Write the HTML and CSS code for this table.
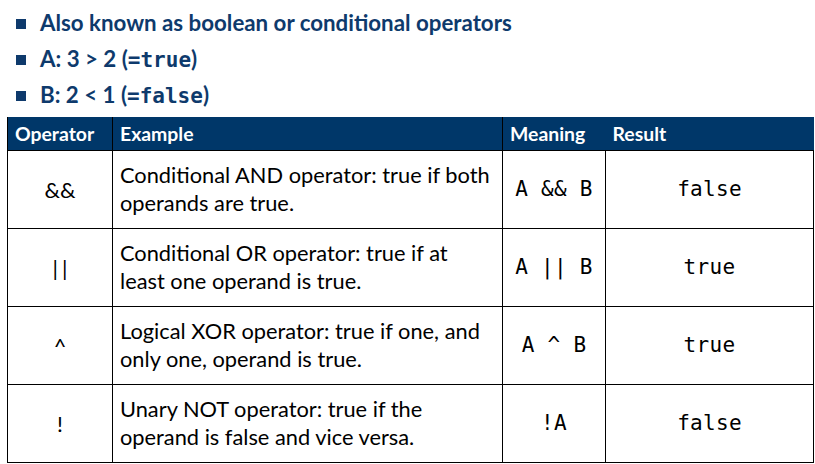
FILE: index.html
```html
<!DOCTYPE html>
<html>
<head>
<meta charset="utf-8">
<link rel="stylesheet" href="styles.css">
</head>
<body>
<ul class="bullets">
  <li>Also known as boolean or conditional operators</li>
  <li>A: 3 &gt; 2 (<span class="mono">=true</span>)</li>
  <li>B: 2 &lt; 1 (<span class="mono">=false</span>)</li>
</ul>
<table class="ops">
  <colgroup>
    <col class="c-op"><col class="c-ex"><col class="c-me"><col class="c-re">
  </colgroup>
  <thead>
    <tr><th>Operator</th><th>Example</th><th>Meaning</th><th class="nb">Result</th></tr>
  </thead>
  <tbody>
    <tr><td class="op">&amp;&amp;</td><td class="ex">Conditional AND operator: true if both<br>operands are true.</td><td class="me">A &amp;&amp; B</td><td class="re">false</td></tr>
    <tr><td class="op pipes">||</td><td class="ex">Conditional OR operator: true if at<br>least one operand is true.</td><td class="me">A || B</td><td class="re">true</td></tr>
    <tr><td class="op">^</td><td class="ex">Logical XOR operator: true if one, and<br>only one, operand is true.</td><td class="me">A ^ B</td><td class="re">true</td></tr>
    <tr><td class="op">!</td><td class="ex">Unary NOT operator: true if the<br>operand is false and vice versa.</td><td class="me">!A</td><td class="re">false</td></tr>
  </tbody>
</table>
</body>
</html>
```
FILE: styles.css
```css
html, body { margin: 0; padding: 0; background: #fff; }
body { font-family: Lato, "Open Sans", sans-serif; width: 815px; height: 464px; overflow: hidden; }

.bullets {
  list-style: none;
  margin: 0;
  padding: 5px 0 0 40px;
  color: #0e3a6c;
  font-weight: 700;
  font-size: 22.3px;
}
.bullets li {
  position: relative;
  height: 36px;
  line-height: 36px;
}
.bullets li::before {
  content: "";
  position: absolute;
  left: -24px;
  top: 14px;
  width: 10px;
  height: 10px;
  background: #0e3a6c;
}
.mono { font-family: "DejaVu Sans Mono", monospace; font-weight: 700; font-size: 21px; }

.ops {
  margin: 4px 0 0 7px;
  width: 806px;
  border-collapse: collapse;
  table-layout: fixed;
}
.c-op { width: 105px; }
.c-ex { width: 390px; }
.c-me { width: 103px; }
.c-re { width: 208px; }

.ops th {
  background: #003769;
  color: #fff;
  font-weight: 700;
  font-size: 19.4px;
  text-align: left;
  height: 33px;
  padding: 0 0 0 7px;
  border-left: 1px solid #000;
  box-sizing: border-box;
}
.ops th.nb { border-left: none; }
.ops td {
  border: 1px solid #000;
  height: 78px;
  box-sizing: border-box;
  font-size: 21.8px;
  color: #000;
  vertical-align: middle;
}
.ops td.op { text-align: center; }
.ops td.pipes { letter-spacing: 4px; text-indent: 4px; }
.ops td.ex { padding: 0 4px 0 7px; line-height: 28px; white-space: nowrap; }
.ops td.me, .ops td.re { text-align: center; font-family: "DejaVu Sans Mono", monospace; font-size: 21px; letter-spacing: 0.3px; }
```
